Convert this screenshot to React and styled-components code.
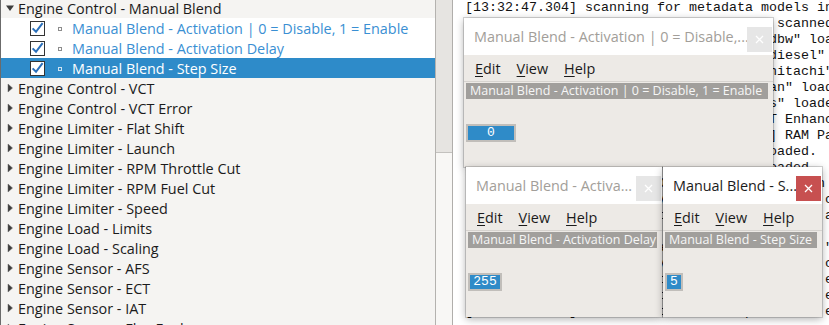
import styled, { createGlobalStyle } from 'styled-components';

const GlobalStyle = createGlobalStyle`
  html, body {
    margin: 0;
    padding: 0;
    background: #ffffff;
  }
  body {
    font-family: "Open Sans", "Noto Sans", sans-serif;
  }
`;

const Screen = styled.div`
  position: relative;
  display: flex;
  width: 829px;
  height: 325px;
  overflow: hidden;
  background: #ffffff;
`;

/* ---------- tree ---------- */

const TreePanel = styled.div`
  flex: none;
  width: 434px;
  background: #f5f4f2;
  border-left: 1px solid #6b6b6b;
  border-right: 1px solid #b4b2af;
  overflow: hidden;
`;

const TreeList = styled.div`
  margin-top: -2px;
`;

const rowBg = {
  parent: 'transparent',
  child: '#ffffff',
  selected: '#2e8bc9',
};

const rowColor = {
  parent: '#1b1b1b',
  child: '#3a8fd3',
  selected: '#ffffff',
};

const Row = styled.div`
  display: flex;
  align-items: center;
  height: 20px;
  background: ${p => rowBg[p.$kind]};
  color: ${p => rowColor[p.$kind]};
  font-size: 14.4px;
  white-space: nowrap;
`;

const Expander = styled.div`
  flex: none;
  width: 17px;
  height: 20px;
  display: flex;
  align-items: center;
  justify-content: center;
`;

const CheckBox = styled.div`
  flex: none;
  width: 15px;
  height: 15px;
  margin-left: 29px;
  box-sizing: border-box;
  border: 1px solid #333333;
  background: #ffffff;
  display: flex;
  align-items: center;
  justify-content: center;
`;

const Bullet = styled.div`
  flex: none;
  width: 4px;
  height: 4px;
  margin-left: 13px;
  margin-top: 2px;
  border: 1px solid ${p => (p.$selected ? '#cfe3f2' : '#8c8c8c')};
  box-sizing: border-box;
`;

const ChildLabel = styled.span`
  margin-left: 10px;
`;

function Arrow({ open }) {
  return open ? (
    <svg width="10" height="8" viewBox="0 0 10 8">
      <path d="M1 1.5 L9 1.5 L5 7 Z" fill="#3c3c3c" />
    </svg>
  ) : (
    <svg width="6" height="10" viewBox="0 0 6 10">
      <path d="M1 1 L5.5 5 L1 9 Z" fill="#3c3c3c" stroke="#6a6a6a" strokeWidth="0.5" />
    </svg>
  );
}

function Check() {
  return (
    <svg width="13" height="13" viewBox="0 0 13 13">
      <path d="M1.6 6.4 L5 9.8 L11.6 1.2" fill="none" stroke="#2a6fba" strokeWidth="2" />
    </svg>
  );
}

const treeItems = [
  { kind: 'parent', open: true, text: 'Engine Control - Manual Blend' },
  { kind: 'child', text: 'Manual Blend - Activation | 0 = Disable, 1 = Enable' },
  { kind: 'child', text: 'Manual Blend - Activation Delay' },
  { kind: 'selected', text: 'Manual Blend - Step Size' },
  { kind: 'parent', text: 'Engine Control - VCT' },
  { kind: 'parent', text: 'Engine Control - VCT Error' },
  { kind: 'parent', text: 'Engine Limiter - Flat Shift' },
  { kind: 'parent', text: 'Engine Limiter - Launch' },
  { kind: 'parent', text: 'Engine Limiter - RPM Throttle Cut' },
  { kind: 'parent', text: 'Engine Limiter - RPM Fuel Cut' },
  { kind: 'parent', text: 'Engine Limiter - Speed' },
  { kind: 'parent', text: 'Engine Load - Limits' },
  { kind: 'parent', text: 'Engine Load - Scaling' },
  { kind: 'parent', text: 'Engine Sensor - AFS' },
  { kind: 'parent', text: 'Engine Sensor - ECT' },
  { kind: 'parent', text: 'Engine Sensor - IAT' },
  { kind: 'parent', text: 'Engine Sensor - Flex Fuel' },
];

function Tree() {
  return (
    <TreePanel>
      <TreeList>
        {treeItems.map((item, i) =>
          item.kind === 'parent' ? (
            <Row key={i} $kind="parent">
              <Expander>
                <Arrow open={item.open} />
              </Expander>
              <span>{item.text}</span>
            </Row>
          ) : (
            <Row key={i} $kind={item.kind}>
              <CheckBox>
                <Check />
              </CheckBox>
              <Bullet $selected={item.kind === 'selected'} />
              <ChildLabel>{item.text}</ChildLabel>
            </Row>
          )
        )}
      </TreeList>
    </TreePanel>
  );
}

/* ---------- scrollbar + log ---------- */

const ScrollTrack = styled.div`
  flex: none;
  width: 16px;
  background: #f8f7f5;
  border-right: 1px solid #b0aeab;
  display: flex;
  flex-direction: column;
`;

const ScrollThumb = styled.div`
  height: 152px;
  background: #e6e4e1;
  border-bottom: 1px solid #c3c1be;
`;

const LogPanel = styled.div`
  flex: 1;
  background: #ffffff;
  padding-left: 12px;
  overflow: hidden;
`;

const LogText = styled.pre`
  margin: 0;
  font-family: "Liberation Mono", "Courier New", monospace;
  font-size: 13.33px;
  line-height: 16px;
  color: #111111;
  white-space: pre;
`;

const logLines = [
  '[13:32:47.304] scanning for metadata models in C:\\RomRaider\\ecu_defs',
  '[13:32:47.309] all metadata files were scanned',
  '[13:32:47.311] metadata model "subaru_dbw" loaded',
  '[13:32:47.314] metadata model "subaru_diesel" loaded',
  '[13:32:47.316] metadata model "subaru_hitachi" loaded',
  '[13:32:47.320] metadata model "mazda_can" loaded',
  '[13:32:47.322] metadata model "ford_ecs" loaded',
  '[13:32:47.324] definition set SSM-ECU-T Enhanced',
  '[13:32:47.327] definition set [SSM-ECU] RAM Parameters',
  '[13:32:47.331] 1284 definitions were loaded.',
  '[13:32:47.335] 212 table definitions loaded.',
  '[13:32:47.402] opening ROM image A2WC522N.bin',
  '[13:32:47.418] checksum verification of ROM: correct',
  '[13:32:47.520] table editor for Manual Blend activated',
  '[13:32:47.522] 3 windows open',
  '[13:32:47.530] set the value of cells [0,0]: "0"',
  '[13:32:47.533] checksum verification of ROM: correct',
  '[13:32:47.540] table editor for Manual Blend edited',
  '[13:32:47.544] table editor for Step Size is enabled',
  '[13:32:47.551] table editor for Step Size is enabled',
];

/* ---------- floating table windows ---------- */

const Frame = styled.div`
  position: absolute;
  left: ${p => p.$x}px;
  top: ${p => p.$y}px;
  width: ${p => p.$w}px;
  height: ${p => p.$h}px;
  display: flex;
  flex-direction: column;
  background: #edeae6;
  box-shadow: 0 0 0 1px rgba(0, 0, 0, 0.16), 0 2px 8px rgba(0, 0, 0, 0.32);
`;

const TitleBar = styled.div`
  position: relative;
  flex: none;
  height: 37px;
  display: flex;
  align-items: center;
  padding-left: 10px;
  background: #ffffff;
  font-size: 14.4px;
  white-space: nowrap;
  color: ${p => (p.$active ? '#1b1b1b' : '#a29e99')};
`;

const CloseButton = styled.div`
  position: absolute;
  right: 1px;
  top: 9px;
  width: 25px;
  height: 25px;
  display: flex;
  align-items: center;
  justify-content: center;
  background: ${p => (p.$active ? '#c75050' : '#e6e6e6')};
`;

const MenuBar = styled.div`
  flex: none;
  height: 26px;
  display: flex;
  align-items: center;
  gap: 16px;
  padding-left: 11px;
  border-bottom: 1px solid #d6d3cf;
  font-size: 14.4px;
  color: #1b1b1b;
`;

const Mnemonic = styled.span`
  text-decoration: underline;
  text-underline-offset: 2px;
`;

const Body = styled.div`
  flex: 1;
  padding: 1px 5px 0 2px;
`;

const Caption = styled.div`
  height: 16px;
  line-height: 16px;
  padding-left: 4px;
  background: #a19f9c;
  color: #f6f6f6;
  font-size: 12.5px;
  white-space: nowrap;
  overflow: hidden;
`;

const ValueCell = styled.div`
  margin-top: 25px;
  width: ${p => p.$w}px;
  height: 18px;
  box-sizing: border-box;
  border: 2px solid #c1beba;
  background: #2f8bc8;
  color: #ffffff;
  font-family: "Liberation Mono", "Courier New", monospace;
  font-size: 13px;
  line-height: 14px;
  text-align: center;
`;

function CloseIcon() {
  return (
    <svg width="9" height="9" viewBox="0 0 9 9">
      <path d="M1 1 L8 8 M8 1 L1 8" stroke="#ffffff" strokeWidth="1.3" />
    </svg>
  );
}

function TableWindow({ x, y, w, h, title, active, caption, value, cellWidth }) {
  return (
    <Frame $x={x} $y={y} $w={w} $h={h}>
      <TitleBar $active={active}>
        {title}
        <CloseButton $active={active}>
          <CloseIcon />
        </CloseButton>
      </TitleBar>
      <MenuBar>
        <span><Mnemonic>E</Mnemonic>dit</span>
        <span><Mnemonic>V</Mnemonic>iew</span>
        <span><Mnemonic>H</Mnemonic>elp</span>
      </MenuBar>
      <Body>
        <Caption>{caption}</Caption>
        <ValueCell $w={cellWidth}>{value}</ValueCell>
      </Body>
    </Frame>
  );
}

export default function App() {
  return (
    <>
      <GlobalStyle />
      <Screen>
        <Tree />
        <ScrollTrack>
          <ScrollThumb />
        </ScrollTrack>
        <LogPanel>
          <LogText>{logLines.join('\n')}</LogText>
        </LogPanel>

        <TableWindow
          x={464}
          y={18}
          w={309}
          h={149}
          title="Manual Blend - Activation | 0 = Disable,..."
          caption="Manual Blend - Activation | 0 = Disable, 1 = Enable"
          value="0"
          cellWidth={50}
        />
        <TableWindow
          x={466}
          y={167}
          w={196}
          h={150}
          title="Manual Blend - Activa..."
          caption="Manual Blend - Activation Delay"
          value="255"
          cellWidth={34}
        />
        <TableWindow
          x={663}
          y={167}
          w={159}
          h={150}
          active
          title="Manual Blend - S..."
          caption="Manual Blend - Step Size"
          value="5"
          cellWidth={18}
        />
      </Screen>
    </>
  );
}
